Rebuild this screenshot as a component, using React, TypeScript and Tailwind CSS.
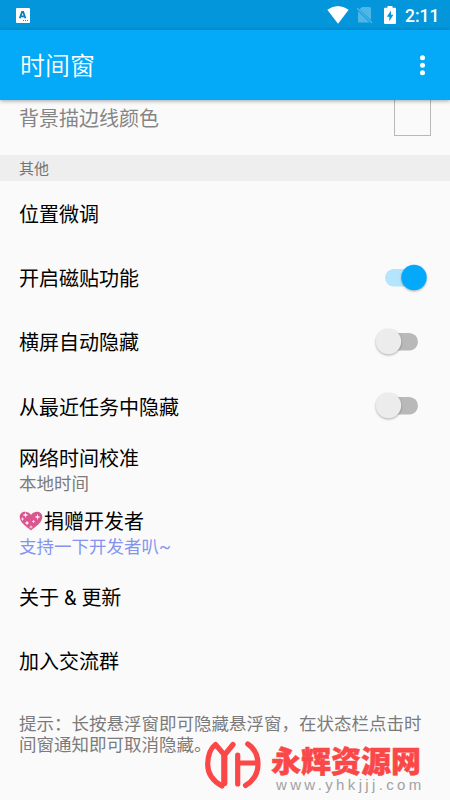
import clsx from 'clsx'

function StatusBar() {
  return (
    <div className="flex h-[30px] shrink-0 items-center justify-between bg-[#0396da] pr-[12px] pl-[16px] text-white">
      <svg width="14" height="15" viewBox="0 0 14 15">
        <rect width="14" height="15" rx="1" fill="#fff" />
        <path d="M3.8 10.3L6 4H7.2L9.4 10.3M5 8.4h3.6" fill="none" stroke="#0380bd" strokeWidth="1.8" />
        <path d="M7 12.5h1M9 12.5h1M11 12.5h1" stroke="#0396da" />
      </svg>
      <div className="flex items-center">
        <svg width="22" height="18" viewBox="0 0 22 18">
          <path d="M0.3 3.8Q11 -3.6 21.7 3.8L11 17.8Z" fill="#fff" />
        </svg>
        <svg className="ml-[7px]" width="17" height="18" viewBox="0 0 17 18">
          <path d="M6 1H13.5Q15 1 15 2.5V14L3.5 3.2ZM2 5L13.5 16.5H3Q2 16.5 2 15.5Z" fill="#4fb6e5" />
          <path d="M1 2L16 17" stroke="#4fb6e5" strokeWidth="1.2" />
        </svg>
        <svg className="ml-[11px]" width="12" height="18" viewBox="0 0 12 18">
          <path d="M3.5 0h5v1.8H11q1 0 1 1V17q0 1-1 1H1q-1 0-1-1V2.8q0-1 1-1h2.5Z" fill="#fff" />
          <path d="M7 4.5L2.8 10.7H5.3V15.3L9.4 8.8H7Z" fill="#0396da" />
        </svg>
        <span className="ml-[9px] w-[33px] pt-[2px] font-[Roboto,sans-serif] text-[17.5px] leading-[28px] font-medium whitespace-nowrap">2:11</span>
      </div>
    </div>
  )
}

function AppBar() {
  return (
    <div className="z-10 flex h-[70px] shrink-0 items-center justify-between bg-[#04a9f7] pr-[25px] pl-[20px] shadow-[0_1px_4px_rgba(0,0,0,0.35)]">
      <h1 className="pb-[2px] text-[25px] leading-[36px] font-[350] text-white">时间窗</h1>
      <svg width="5" height="21" viewBox="0 0 5 21" fill="#fff">
        <circle cx="2.5" cy="2.7" r="2.5" />
        <circle cx="2.5" cy="10.2" r="2.5" />
        <circle cx="2.5" cy="17.7" r="2.5" />
      </svg>
    </div>
  )
}

function Switch({ on }: { on?: boolean }) {
  return (
    <svg className={clsx('shrink-0 overflow-visible', on ? 'text-[#04a9fb]' : 'text-[#ececec]')} width="52" height="30" viewBox="0 0 52 30">
      <rect x={on ? 10 : 8} y="6" width={on ? 36 : 35} height="17.5" rx="8.75" fill={on ? '#b4e5fc' : '#b9b9b9'} />
      <circle className="drop-shadow-[0_1px_1px_rgba(0,0,0,0.3)]" cx={on ? 39 : 13.5} cy="14.5" r="12.7" fill="currentColor" />
    </svg>
  )
}

function Row({ title, toggle, on }: { title: string; toggle?: boolean; on?: boolean }) {
  return (
    <div className="flex h-[64.4px] shrink-0 items-center justify-between pr-[23px] pl-[19px]">
      <span className="pt-px">{title}</span>
      {toggle && <Switch on={on} />}
    </div>
  )
}

function Heart() {
  return (
    <svg className="mr-px" width="24" height="20" viewBox="0 0 24 20">
      <path d="M12 19.5C8 16 1 12 .7 6.3C.5 2.5 3.5 .6 6.5 .8C9 1 11 2.5 12 4C13 2.5 15 1 17.5 .8C20.5 .6 23.5 2.5 23.3 6.3C23 12 16 16 12 19.5Z" fill="#d9578f" />
      <g stroke="#ffd9ec" strokeWidth="0.9">
        <path d="M6.5 1.5v5M4 4h5M3.5 6.5v3M2 8h3M8 10v4M6 12h4M18.5 3.5v5M16 6h5M14.5 9v3M13 10.5h3M12 14.5v3M10.5 16h3" />
      </g>
      <g fill="#fff">
        <circle cx="6.5" cy="4" r="1.2" />
        <circle cx="18.5" cy="6" r="1.2" />
        <circle cx="8" cy="12" r="0.9" />
      </g>
    </svg>
  )
}

function Watermark() {
  return (
    <div className="absolute top-[740px] left-[204px] flex">
      <svg width="57" height="50" viewBox="0 0 57 50" fill="none" stroke="#fa4747" strokeWidth="5.2" strokeLinecap="round" strokeLinejoin="round">
        <path d="M18 46C9 41 3.7 34 3.7 24.5C3.7 15 7 8 11.5 4.5L20.5 15L29 4.5" />
        <path d="M20.3 16V43" strokeWidth="6.2" />
        <path d="M33.7 44V15M33.7 23H53M43.8 4C50 8 54 15 54 24.5C54 34 49 41 41.5 45.5" />
      </svg>
      <div className="ml-[10px] pt-[2px] whitespace-nowrap">
        <p className="text-[30px] leading-[34px] font-black text-[#fa4747] [-webkit-text-stroke:0.5px_#fa4747]">永辉资源网</p>
        <p className="pl-[5px] font-['Liberation_Sans',sans-serif] text-[15px] leading-[17px] tracking-[3.35px] text-[#a2a2a2]">www.yhkjjj.com</p>
      </div>
    </div>
  )
}

export default function App() {
  return (
    <div className="relative flex h-[800px] w-[450px] flex-col overflow-hidden bg-[#fafafa] font-['Noto_Sans_CJK_SC',sans-serif] text-[20px] leading-[28px] text-black">
      <StatusBar />
      <AppBar />
      {/* Settings */}
      <div className="flex h-[55px] shrink-0 items-start justify-between pr-[19px] pl-[19px]">
        <span className="pt-[4px] text-[#858585]">背景描边线颜色</span>
        <div className="h-[36px] w-[37px] border border-t-0 border-[#b8b8b8]" />
      </div>
      <div className="h-[26px] shrink-0 bg-[#eeeeee] pl-[19px] text-[15px] leading-[25px] text-[#757575]">其他</div>
      <Row title="位置微调" />
      <Row title="开启磁贴功能" toggle on />
      <Row title="横屏自动隐藏" toggle />
      <Row title="从最近任务中隐藏" toggle />
      <div className="flex h-[63.4px] shrink-0 flex-col pt-[5px] pl-[19px]">
        <span>网络时间校准</span>
        <span className="text-[17.5px] leading-[22px] text-[#7b7b7b]">本地时间</span>
      </div>
      <div className="flex h-[63.4px] shrink-0 flex-col pt-[5px] pl-[19px]">
        <span className="flex items-center">
          <Heart />
          捐赠开发者
        </span>
        <span className="text-[17.5px] leading-[22px] text-[#8494ee]">
          支持一下开发者叭<span className="font-[Roboto] leading-none">~</span>
        </span>
      </div>
      <div className="flex h-[63.4px] shrink-0 items-center pl-[19px]">
        <span>
          关于<span className="font-[Roboto] leading-none"> &amp; </span>更新
        </span>
      </div>
      <Row title="加入交流群" />
      <p className="pt-[20px] pl-[19px] text-[17.5px] leading-[20.5px] whitespace-nowrap text-[#7b7b7b]">
        提示：长按悬浮窗即可隐藏悬浮窗，在状态栏点击时
        <br />
        间窗通知即可取消隐藏。
      </p>
      <Watermark />
    </div>
  )
}
